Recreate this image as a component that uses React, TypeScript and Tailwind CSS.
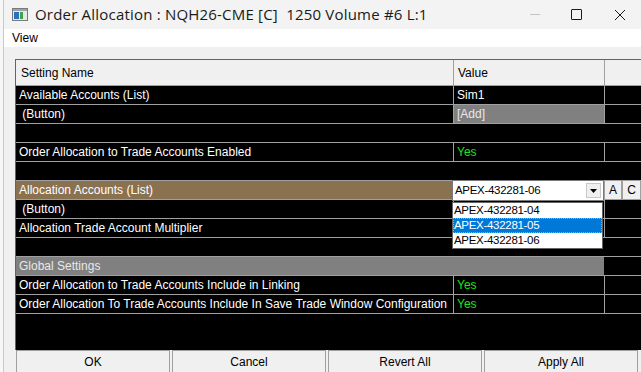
type RowProps = {
  name?: string;
  value?: string;
  bg?: string;
  valueBg?: string;
  valueColor?: string;
  cols?: boolean;
};

function Row({ name = "", value = "", bg = "bg-black", valueBg = "bg-black", valueColor = "text-white", cols = true }: RowProps) {
  return (
    <div className="flex h-[19px] border-b border-[#a0a0a0] bg-black text-[12px] leading-[18px] text-white">
      <div className={`w-[437px] shrink-0 whitespace-pre pl-[3px] ${bg}`}>{name}</div>
      {cols ? (
        <>
          <div className="w-px shrink-0 bg-[#a0a0a0]" />
          <div className={`w-[150px] shrink-0 pl-[3px] ${valueBg} ${valueColor}`}>{value}</div>
          <div className="w-px shrink-0 bg-[#a0a0a0]" />
        </>
      ) : null}
      <div className="flex-1" />
    </div>
  );
}

function TitleIcon() {
  return (
    <svg width="16" height="13" viewBox="0 0 16 13">
      <rect x="0.5" y="0.5" width="15" height="12" fill="#e8e8e8" stroke="#7a7a7a" />
      <rect x="1" y="1" width="14" height="2" fill="#9aa4ae" />
      <rect x="2" y="4" width="5" height="7" fill="#2f6fc0" />
      <rect x="8" y="4" width="3" height="7" fill="#3fa34d" />
    </svg>
  );
}

export default function App() {
  const font = { fontFamily: '"Liberation Sans", Arial, sans-serif' };

  return (
    <div className="flex h-[372px] w-[641px] overflow-hidden bg-[#f0f0f0]" style={font}>
      {/* window edge */}
      <div className="w-[3px] shrink-0 bg-[#f7f7f7]" />
      <div className="w-px shrink-0 bg-[#b8cce4]" />

      <div className="flex min-w-0 flex-1 flex-col">
        {/* title bar */}
        <div className="flex h-[29px] shrink-0 items-center bg-[#f3f3f3] text-[15px] text-[#1a1a1a]">
          <div className="ml-[8px] mr-[7px] flex items-center">
            <TitleIcon />
          </div>
          <span
            className="whitespace-pre tracking-[0.2px]"
            style={{ fontFamily: '"Open Sans", "Liberation Sans", sans-serif' }}
          >
            Order Allocation : NQH26-CME [C]  1250 Volume #6 L:1
          </span>
          <div className="ml-auto flex items-center">
            <div className="flex w-[36px] justify-center">
              <div className="h-px w-[10px] bg-[#c4c4c4]" />
            </div>
            <div className="flex w-[46px] justify-center">
              <div className="h-[11px] w-[11px] rounded-[1px] border border-[#1a1a1a]" />
            </div>
            <div className="flex w-[42px] justify-center">
              <svg width="12" height="12" viewBox="0 0 12 12">
                <path d="M1 1 L11 11 M11 1 L1 11" stroke="#1a1a1a" strokeWidth="1" />
              </svg>
            </div>
          </div>
        </div>

        {/* menu */}
        <div className="flex h-[18px] shrink-0 items-center bg-white pl-[8px] text-[12px] text-black">View</div>
        <div className="h-[12px] shrink-0 bg-[#f0f0f0]" />

        {/* grid */}
        <div className="ml-[11px] flex flex-col">
          <div className="relative border-l border-t border-[#646464]">
            <div className="flex h-[26px] border-b border-[#a0a0a0] bg-[#f0f0f0] text-[12px] text-black">
              <div className="flex w-[437px] shrink-0 items-center pl-[5px]">Setting Name</div>
              <div className="w-px shrink-0 bg-[#a0a0a0]" />
              <div className="flex w-[150px] shrink-0 items-center pl-[4px]">Value</div>
              <div className="w-px shrink-0 bg-[#a0a0a0]" />
              <div className="flex-1" />
            </div>

            <Row name="Available Accounts (List)" value="Sim1" />
            <Row name=" (Button)" value="[Add]" valueBg="bg-[#808080]" valueColor="text-[#e8e8e8]" />
            <Row cols={false} />
            <Row name="Order Allocation to Trade Accounts Enabled" value="Yes" valueColor="text-[#19e619]" />
            <Row cols={false} />
            <Row name="Allocation Accounts (List)" bg="bg-[#8a7150]" />
            <Row name=" (Button)" />
            <Row name="Allocation Trade Account Multiplier" />
            <Row cols={false} />
            <div className="flex h-[19px] border-b border-[#a0a0a0] bg-black text-[12px] leading-[18px] text-[#e8e8e8]">
              <div className="w-[588px] shrink-0 bg-[#808080] pl-[3px]">Global Settings</div>
            </div>
            <Row name="Order Allocation to Trade Accounts Include in Linking" value="Yes" valueColor="text-[#19e619]" />
            <Row
              name="Order Allocation To Trade Accounts Include In Save Trade Window Configuration"
              value="Yes"
              valueColor="text-[#19e619]"
            />
            <div className="h-[36px] bg-black" />

            {/* combo box */}
            <div className="absolute left-[436px] top-[120px] flex h-[21px] w-[152px] items-center border border-[#7a7a7a] bg-white text-[11.5px] tracking-[-0.3px] text-black">
              <span className="pl-[2px]">APEX-432281-06</span>
              <div className="ml-auto mr-[2px] flex h-[15px] w-[15px] items-center justify-center border border-[#c8c8c8] bg-[#f0f0f0]">
                <svg width="7" height="4" viewBox="0 0 7 4">
                  <path d="M0 0 H7 L3.5 4 Z" fill="#000" />
                </svg>
              </div>
            </div>
            <div className="absolute left-[588px] top-[120px] flex h-[20px] w-[18px] items-center justify-center border border-[#a0a0a0] bg-[#f0f0f0] text-[12px] text-black">
              A
            </div>
            <div className="absolute left-[606px] top-[120px] flex h-[20px] w-[19px] items-center justify-center border border-[#a0a0a0] bg-[#f0f0f0] text-[12px] text-black">
              C
            </div>

            {/* dropdown list */}
            <div className="absolute left-[436px] top-[142px] flex w-[151px] flex-col border border-[#646464] bg-white text-[11.5px] tracking-[-0.3px] text-black">
              <div className="h-[15px] pl-[1px] leading-[15px]">APEX-432281-04</div>
              <div className="h-[15px] border border-dotted border-[#e0a050] bg-[#0078d7] pl-0 leading-[13px] text-white">
                APEX-432281-05
              </div>
              <div className="h-[15px] pl-[1px] leading-[15px]">APEX-432281-06</div>
            </div>
          </div>

          {/* buttons */}
          <div className="flex gap-[2px] pl-px text-[12px] text-black">
            <div className="flex h-[24px] w-[154px] items-center justify-center border border-[#a0a0a0] bg-[#f0f0f0]">OK</div>
            <div className="flex h-[24px] w-[154px] items-center justify-center border border-[#a0a0a0] bg-[#f0f0f0]">Cancel</div>
            <div className="flex h-[24px] w-[154px] items-center justify-center border border-[#a0a0a0] bg-[#f0f0f0]">Revert All</div>
            <div className="flex h-[24px] w-[154px] items-center justify-center border border-[#a0a0a0] bg-[#f0f0f0]">Apply All</div>
          </div>
        </div>
      </div>
    </div>
  );
}
